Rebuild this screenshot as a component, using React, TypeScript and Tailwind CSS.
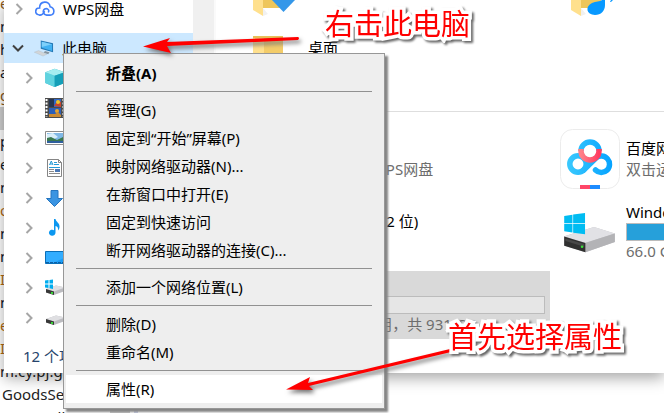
import React, { useState } from 'react';

const codeLines = [
  { text: 'e', color: 'text-[#8a5a1c]' },
  { text: 'n', color: 'text-[#101828]' },
  { text: 'h', color: 'text-[#101828]' },
  { text: 'a', color: 'text-[#101828]' },
  { text: 'g', color: 'text-[#8a5a1c]' },
  { text: '', color: 'bg-[#d0d0d0]' },
  { text: 'p', color: 'text-[#101828]' },
  { text: 'e', color: 'text-[#101828]' },
  { text: 'm', color: 'text-[#101828]' },
  { text: 'o', color: 'text-[#b06a10]' },
  { text: 'm', color: 'text-[#101828]' },
  { text: 'm', color: 'text-[#101828]' },
  { text: 'I', color: 'text-[#b06a10]' },
  { text: 'm', color: 'text-[#101828]' },
  { text: 'e', color: 'text-[#b06a10]' },
  { text: 'I', color: 'text-[#b06a10]' },
  { text: 'm.cy.pj.g', color: 'text-[#222222]' },
  { text: 'GoodsSer', color: 'text-[#222222]' },
];

const CubeIcon = () => (
  <svg viewBox="137 205 60 60" className="h-5 w-5">
    <path d="M138 218 166 207 196 218V250L166 262 138 250Z" fill="#31b8cc" />
    <path d="M138 218 166 228V262L138 250Z" fill="#5fd3df" />
    <path d="M138 218 166 207 196 218 166 228Z" fill="#a5edf0" />
    <path d="M166 228 196 218V250L166 262Z" fill="#159fb8" />
  </svg>
);

const VideoIcon = () => (
  <svg viewBox="0 0 20 20" className="h-5 w-5">
    <path d="M0 0h20v20H0z" fill="#4b4b4b" />
    <path d="M4 1h12v8H4z" fill="#2f67c8" />
    <path d="M4 10h12v9H4z" fill="#2b5fb8" />
    <path d="M4 1h5v8H4z" fill="#263650" />
    <path d="m9 8 4-6 3 2v5Z" fill="#c8452d" />
    <circle cx="13" cy="4" r="2" fill="#e9c52c" />
    <circle cx="12" cy="13" r="2" fill="#e9a52c" />
    <path d="M4 16h6l3-2 3 3v2H4Z" fill="#cb8b32" />
    <path d="M1.500 1v18M18.500 1v18" stroke="#fff" strokeWidth="2" strokeDasharray="2 1.500" />
  </svg>
);

const PictureIcon = () => (
  <svg viewBox="0 0 20 20" className="h-5 w-5">
    <path d="M.5 3.500h19v13H.5z" fill="#fff" stroke="#8b8b8b" />
    <path d="M2 5h16v10H2z" fill="#7fb8e6" />
    <path d="m2 6 6-1 5 4-4 2H2Z" fill="#d8eefa" />
    <path d="m2 10 4-1 6 3 6-3v4H2Z" fill="#39784f" />
    <path d="M2 13h16v2H2z" fill="#2f5f9e" />
  </svg>
);

const DocumentIcon = () => (
  <svg viewBox="0 0 20 20" className="h-5 w-5">
    <path d="M2.500 1.500h11l3 3v14h-14z" fill="#fff" stroke="#858585" />
    <path d="M13.500 1.500v3h3" fill="none" stroke="#858585" />
    <path d="m4.500 7 1.800-4L8 7M5 6h2.500" fill="none" stroke="#239ad7" />
    <path d="M9 4.500h3M9 6.500h5M4 9.500h11" stroke="#239ad7" />
    <path d="M4 11.500h5M4 13.500h5M4 15.500h11" stroke="#8b8b8b" />
    <path d="M10 11h5v3h-5z" fill="#4a77b5" />
  </svg>
);

const DownloadIcon = () => (
  <svg viewBox="0 0 20 20" className="h-5 w-5">
    <path d="M6 2.500h7v8h4.500L9.500 18.500 1.500 10.500H6z" fill="#3a94e2" stroke="#2475c0" />
  </svg>
);

const MusicIcon = () => (
  <svg viewBox="0 0 20 20" className="h-5 w-5">
    <path d="M9 1h1.500c.5 3 4.500 4 4 8 0 1.500-.7 2.500-1.500 3.500.3-3-.5-4-2.500-4.500v6.500A3.300 3 0 1 1 9 12.200Z" fill="#0b97f0" />
  </svg>
);

const DesktopIcon = () => (
  <svg viewBox="0 0 20 20" className="h-5 w-5">
    <path d="M.5 3.500h19v12H.5z" fill="#1b9cf5" stroke="#0a6fb8" />
    <path d="M19 4v6L8 15H1V4Z" fill="#32adff" />
    <path d="M1 14.500h18" stroke="#0b5fa4" strokeDasharray="3 1" />
  </svg>
);

const DriveIcon = ({ windows, className }: { windows?: boolean; className: string }) => (
  <svg viewBox="390 258 180 130" className={className}>
    <path d="M402 334 492 306 555 326V352L466 383 402 362Z" fill="#c2c2c6" />
    <path d="M402 335 492 306 555 326 466 354Z" fill="#e1e1e5" />
    <path d="M466 355 555 326V352L466 383Z" fill="#b3b3b6" />
    <path d="M402 335 466 355V383L402 363Z" fill="#303030" />
    <path d="m406 341 56 17v8l-56-17Z" fill="#484848" />
    <circle cx="456" cy="366" r="4" fill="#3be03b" />
    {windows && <path d="M402 273 427 269V295H402ZM429 268.500 465 264V295H429ZM402 297H427V323L402 319ZM429 297H465V328L429 323.500Z" fill="#00bcf2" />}
  </svg>
);

const SmallDriveIcon = ({ windows }: { windows?: boolean }) => (
  <svg viewBox="0 0 20 20" className="h-5 w-5">
    <path d="M1 11 11 7.500 20 9.500V13L9 17 1 14.500Z" fill="#bcbcc0" />
    <path d="M1 11 11 7.500 20 9.500 9 13.500Z" fill="#dfdfe2" />
    <path d="m1 11 8 2.500V17l-8-2.500Z" fill="#383838" />
    <path d="M6 14h2v2H6z" fill="#36d436" />
    {windows && <path d="M0 2.500 3.500 2v3.500H0ZM4.500 2 8 1.500v4H4.500ZM0 6.500h3.500V10L0 9.500ZM4.500 6.500H8V11l-3.500-.7Z" fill="#00adef" />}
  </svg>
);

const CloudIcon = () => (
  <svg viewBox="104 0 62 50" className="h-4 w-5">
    <path
      d="M118 44C100 41 104 21 118 22 118 -2 149 -2 151 18 168 23 165 44 151 44H140C130 43 126 30 134 25 142 21 149 28 146 34M118 44C127 45 130 39 133 34"
      fill="none"
      stroke="#417ff9"
      strokeWidth="5"
      strokeLinecap="round"
    />
  </svg>
);

const ComputerIcon = () => (
  <svg viewBox="106 120 62 54" className="h-[18px] w-5">
    <path d="M127 124 165 132V160L127 149Z" fill="#2478b4" />
    <path d="M130 128 162 135V156L130 146Z" fill="#41b1f2" />
    <path d="M130 128 162 135 130 144Z" fill="#7ed0fa" />
    <path d="m140 156 14 4-4 6-14-4Z" fill="#8795a0" />
    <path d="M107 160 120 155 146 166 134 172Z" fill="#d2d5d8" stroke="#a8b2ba" />
  </svg>
);

const BaiduIcon = () => (
  <svg viewBox="0 0 60 60" className="h-[60px] w-[60px]">
    <defs>
      <linearGradient id="cloud" x1="8" y1="0" x2="52" y2="0" gradientUnits="userSpaceOnUse">
        <stop offset="0" stopColor="#39c8fd" />
        <stop offset="1" stopColor="#06a3ff" />
      </linearGradient>
      <linearGradient id="ring">
        <stop offset="0" stopColor="#ff8088" />
        <stop offset="1" stopColor="#ff3c61" />
      </linearGradient>
    </defs>
    <rect x=".5" y=".5" width="59" height="59" rx="12" fill="#fff" stroke="#ececec" />
    <g fill="none" stroke="url(#cloud)" strokeWidth="5.500">
      <circle cx="18" cy="35" r="8.200" />
      <path d="M23.500 41.200 36 29A8.200 8.200 0 1 1 35.500 41" strokeLinecap="round" />
      <path d="M21 22a9 9 0 0 1 18 0" />
    </g>
    <path d="M21 20v2a9 9 0 0 0 18 0v-2" fill="none" stroke="url(#ring)" strokeWidth="5.500" />
    <path d="M20 56h10v4H20z" fill="#ff4668" />
    <path d="M30 56h10v4H30z" fill="#1d8cff" />
  </svg>
);

// the first row of folders is scrolled half out of view
const CroppedFolder = ({ music }: { music?: boolean }) => (
  <svg viewBox="0 0 60 16" className="h-4 w-[60px]">
    <path d="M20 0h21v8H20z" fill="#eec65b" />
    <path d="M11 0h10v16L11 10Z" fill="#ffe08d" />
    <path d="M21 8v8l5-2Z" fill="#f1f1f1" />
    {music ? (
      <path d="M45 0v5c0 6-4 10-10 10-9 0-10-9-3-12C36 1 40 2 42 0ZM50 2l1-2h2l-2 2Z" fill="#0899ff" />
    ) : (
      <path d="M30 0h23L41.500 12Z" fill="#3497e9" />
    )}
  </svg>
);

const FolderIcon = () => (
  <svg viewBox="0 0 60 52" className="h-[52px] w-[60px]">
    <path d="M11 0h30v47H20z" fill="#f3cc69" />
    <path d="M11 0h11v14l-1 38-10-6Z" fill="#ffe08d" />
    <path d="M11 0h30v2H11z" fill="#e9c25a" />
  </svg>
);

const treeItems = [
  { name: '3D 对象', icon: <CubeIcon /> },
  { name: '视频', icon: <VideoIcon /> },
  { name: '图片', icon: <PictureIcon /> },
  { name: '文档', icon: <DocumentIcon /> },
  { name: '下载', icon: <DownloadIcon /> },
  { name: '音乐', icon: <MusicIcon /> },
  { name: '桌面', icon: <DesktopIcon /> },
  { name: 'Windows (C:)', icon: <SmallDriveIcon windows /> },
  { name: '软件 (D:)', icon: <SmallDriveIcon /> },
];

const menuGroups = [
  ['折叠(A)'],
  ['管理(G)', '固定到“开始”屏幕(P)', '映射网络驱动器(N)...', '在新窗口中打开(E)', '固定到快速访问', '断开网络驱动器的连接(C)...'],
  ['添加一个网络位置(L)'],
  ['删除(D)', '重命名(M)'],
  ['属性(R)'],
];

const Chevron = ({ label, open }: { label: string; open?: boolean }) => (
  <button aria-label={label} className="flex h-5 w-4 shrink-0 items-center justify-center">
    {open ? (
      <svg viewBox="0 0 12 8" className="h-2 w-3"><path d="m1 1.500 5 5 5-5" fill="none" stroke="#404040" strokeWidth="2" /></svg>
    ) : (
      <svg viewBox="0 0 8 12" className="h-3 w-2"><path d="m1.500 1 5 5-5 5" fill="none" stroke="#a6a6a6" strokeWidth="2" /></svg>
    )}
  </button>
);

const Sidebar = () => (
  <nav className="w-[189px] shrink-0">
    <div className="mb-[9px] flex h-6 items-center gap-2 pb-1.5 pl-[7px]">
      <Chevron label="展开 WPS网盘" />
      <CloudIcon />
      <span>WPS网盘</span>
    </div>
    <div className="flex h-[30px] items-center gap-2 bg-[#cce8ff] pl-1.5">
      <Chevron label="折叠此电脑" open />
      <ComputerIcon />
      <span>此电脑</span>
    </div>
    {treeItems.map((item) => (
      <div key={item.name} className="flex h-[30px] items-center gap-2 pl-[17px]">
        <Chevron label={`展开 ${item.name}`} />
        {item.icon}
      </div>
    ))}
  </nav>
);

const Bar = ({ used, label }: { used: number; label: string }) => (
  <div role="meter" aria-label={label} aria-valuenow={used} className="h-[18px] border border-[#bcbcbc] bg-[#e6e6e6]">
    <div className="h-full bg-[#26a0da]" style={{ width: `${used}%` }} />
  </div>
);

const Tile = ({ icon, children, selected }: { icon?: React.ReactNode; children: React.ReactNode; selected?: boolean }) => (
  <div className={`flex h-[68px] items-center gap-1.5 px-[5px] ${selected ? 'bg-[#d9d9d9]' : ''}`}>
    <div className="w-[60px] shrink-0">{icon}</div>
    <div className="min-w-0 flex-1 whitespace-nowrap leading-[21px]">{children}</div>
  </div>
);

const FileArea = () => (
  <main className="min-w-0 flex-1 overflow-hidden border-l-2 border-[#fafafa]">
    <section className="h-28 overflow-hidden border-b border-[#dedede] pl-[21px]">
      <div className="grid grid-cols-[313px_313px] gap-x-[5px] px-[5px]">
        <CroppedFolder />
        <CroppedFolder music />
      </div>
      <div className="mt-5 flex gap-1.5 px-[5px]">
        <FolderIcon />
        <span className="mt-0.5 leading-[21px]">桌面</span>
      </div>
    </section>
    <section className="grid grid-cols-[313px_313px] gap-[5px] pl-[21px] pt-[13px]">
      <Tile>
        <p>WPS网盘</p>
        <p className="text-[#6d6d6d]">双击运行 WPS网盘</p>
      </Tile>
      <Tile icon={<BaiduIcon />}>
        <p>百度网盘</p>
        <p className="text-[#6d6d6d]">双击运行百度网盘</p>
      </Tile>
      <Tile>
        <p>WPS网盘 (32 位)</p>
        <p className="text-[#6d6d6d]">系统文件夹</p>
      </Tile>
      <Tile icon={<DriveIcon windows className="h-[43px] w-[60px]" />}>
        <p>Windows (C:)</p>
        <Bar used={67} label="Windows (C:)" />
        <p className="text-[#6d6d6d]">66.0 GB 可用，共 200 GB</p>
      </Tile>
      <Tile icon={<DriveIcon className="h-[43px] w-[60px]" />} selected>
        <p>软件 (D:)</p>
        <Bar used={14} label="软件 (D:)" />
        <p className="text-[#6d6d6d]">797 GB 可用，共 931 GB</p>
      </Tile>
    </section>
  </main>
);

const ContextMenu = () => {
  const [active, setActive] = useState('属性(R)');

  return (
    <div role="menu" className="absolute left-[63px] top-[53px] w-[322px] border border-[#979797] bg-[#eeeeee] py-[5px] shadow-[3px_3px_2px_#858585]">
      {menuGroups.map((group, i) => (
        <div key={group[0]}>
          {i > 0 && <hr className="mx-3 my-1 border-[#919191]" />}
          {group.map((label) => (
            <button
              key={label}
              role="menuitem"
              onMouseEnter={() => setActive(label)}
              className={`mx-0.5 block h-7 w-[316px] pl-10 text-left ${i === 0 ? 'font-bold' : ''} ${active === label ? 'bg-white' : ''}`}
            >
              {label}
            </button>
          ))}
        </div>
      ))}
    </div>
  );
};

const Note = ({ text, place }: { text: string; place: string }) => (
  <p
    className={`absolute whitespace-nowrap text-[29px] leading-9 text-[#ff0000] [-webkit-text-stroke:7px_white] [paint-order:stroke_fill] [stroke-linejoin:round] drop-shadow-[2px_2px_1px_#666666] ${place}`}
  >
    {text}
  </p>
);

const App: React.FC = () => {
  return (
    <div className="relative h-screen overflow-hidden bg-white font-['Noto_Sans','Noto_Sans_CJK_SC',sans-serif] text-[15px] text-black">
      {/* Editor behind the explorer window */}
      <div className="absolute inset-0 -mt-2">
        {codeLines.map((line, i) => (
          <div key={i} className={`h-[23px] w-48 leading-[23px] ${line.color} ${line.text === 'GoodsSer' ? 'pl-0.5' : ''}`}>
            {line.text}
          </div>
        ))}
        <div className="flex h-[23px] items-center leading-[23px]">
          <span className="w-[110px] pl-12 text-[#222222]">Album</span>
          <span className="h-full w-5 bg-[#c4c4c4]" />
          <span className="ml-1 h-full w-1 bg-[#c9cfe6]" />
        </div>
      </div>

      {/* Explorer window */}
      <div className="relative ml-1 bg-white shadow-[0_5px_14px_rgba(0,0,0,0.35)]">
        <div className="flex h-[340px] overflow-hidden">
          <Sidebar />
          <div className="w-[21px] shrink-0 bg-[#f0f0f0]" />
          <FileArea />
        </div>
        <footer className="h-[33px] pl-[19px] leading-[33px] text-[#26446b]">12 个项目</footer>
      </div>

      <ContextMenu />

      {/* Annotations */}
      <svg viewBox="0 0 664 413" className="pointer-events-none absolute left-0 top-0 h-[413px] w-[664px] drop-shadow-[2px_3px_2px_#777777]">
        <path d="M143 46.500 170 38 167 42 298 37Q300 38 298 40L167 46 171 53Z" fill="#ff0000" />
        <path d="M286 389.500 310 377 308 383 450 349 451 352 309 386 313 390Z" fill="#ff0000" />
      </svg>
      <Note text="右击此电脑" place="left-[325px] top-[6px]" />
      <Note text="首先选择属性" place="left-[448px] top-[319px]" />
    </div>
  );
};

export default App;
